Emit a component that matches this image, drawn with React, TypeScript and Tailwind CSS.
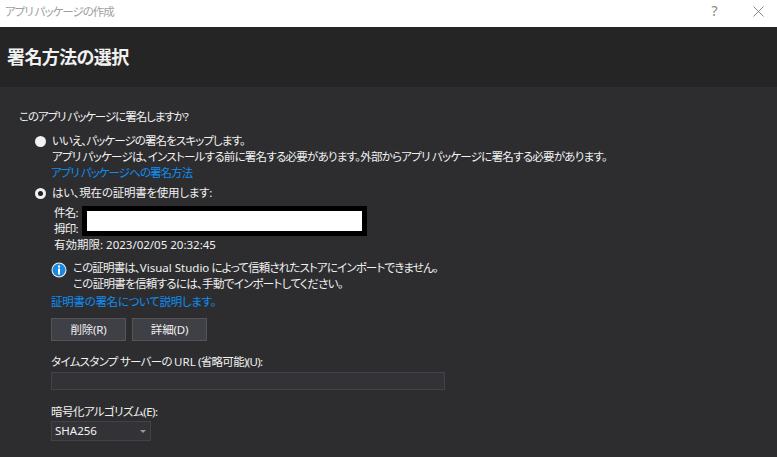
import React from "react";

const font = "font-['Noto_Sans','Noto_Sans_CJK_JP',sans-serif] [font-feature-settings:'palt']";

export default function App() {
  return (
    <div className={`w-[777px] h-[457px] overflow-hidden bg-[#2d2d30] text-[#f1f1f1] text-[11.5px] tracking-[-0.7px] leading-[16px] ${font}`}>
      {/* Title bar */}
      <div className="h-[27px] bg-white flex items-center justify-between text-[#a0a0a0]">
        <span className="pl-[5px] pb-[3px] tracking-[-1px]">アプリ パッケージの作成</span>
        <div className="flex items-center gap-[36px] pr-[13px] pb-[5px]">
          <span className="text-[14px] text-[#888]">?</span>
          <svg width="11" height="11" viewBox="0 0 11 11" stroke="#888" fill="none">
            <path d="M0.5 0.5L10.5 10.5M10.5 0.5L0.5 10.5" />
          </svg>
        </div>
      </div>

      {/* Header */}
      <div className="h-[60px] bg-[#252526] flex items-center pl-[7px] pb-[1px]">
        <h1 className="text-[18px] font-bold leading-[24px] tracking-[-0.6px]">署名方法の選択</h1>
      </div>

      <div className="pl-[19px] pt-[22px]">
        <div className="tracking-[-1.05px]">このアプリ パッケージに署名しますか?</div>

        {/* Skip signing */}
        <div className="flex mt-[8px] ml-[16px]">
          <span className="mt-[3px] w-[11px] h-[11px] rounded-full bg-[#f1f1f1] shrink-0" />
          <div className="ml-[6px]">
            <div className="tracking-[-0.9px]">いいえ、パッケージの署名をスキップします。</div>
            <div className="tracking-[-0.75px]">アプリ パッケージは、インストールする前に署名する必要があります。外部からアプリ パッケージに署名する必要があります。</div>
            <div className="ml-[-1px] text-[#0e8df0] tracking-[-0.95px]">アプリ パッケージへの署名方法</div>
          </div>
        </div>

        {/* Use current cert */}
        <div className="flex mt-[4px] ml-[16px]">
          <span className="mt-[3px] w-[11px] h-[11px] rounded-full bg-[#f1f1f1] shrink-0 flex items-center justify-center">
            <span className="w-[5px] h-[5px] rounded-full bg-[#1e1e1e]" />
          </span>
          <div className="ml-[6px] tracking-[-0.25px]">はい、現在の証明書を使用します:</div>
        </div>

        <div className="ml-[35px] mt-[4px] relative">
          <div>件名:</div>
          <div>拇印:</div>
          <div className="tracking-normal">有効期限: 2023/02/05 20:32:45</div>
          <div className="absolute left-[28px] top-[1px] w-[285px] h-[30px] bg-white border-[5px] border-black" />
        </div>

        {/* Info */}
        <div className="flex ml-[32px] mt-[7px]">
          <svg width="16" height="16" viewBox="0 0 16 16" className="mt-[2px] shrink-0">
            <circle cx="8" cy="8" r="7.5" fill="#f1f1f1" />
            <circle cx="8" cy="8" r="6.5" fill="#1b88e0" />
            <rect x="7" y="3.5" width="2" height="2" fill="#ffffff" />
            <rect x="7" y="6.5" width="2" height="6" fill="#ffffff" />
          </svg>
          <div className="ml-[6px]">
            <div className="tracking-[-0.85px]">この証明書は、<span className="tracking-normal">Visual Studio</span> によって信頼されたストアにインポートできません。</div>
            <div>この証明書を信頼するには、手動でインポートしてください。</div>
          </div>
        </div>

        <div className="ml-[32px] mt-[2px] text-[#0e8df0] tracking-[-0.3px]">証明書の署名について説明します。</div>

        {/* Buttons */}
        <div className="flex gap-[6px] ml-[32px] mt-[8px] tracking-[-0.2px]">
          <button className="w-[75px] h-[23px] bg-[#3f3f46] border border-[#555558]">削除(R)</button>
          <button className="w-[75px] h-[23px] bg-[#3f3f46] border border-[#555558]">詳細(D)</button>
        </div>

        <div className="ml-[32px] mt-[13px]">タイムスタンプ サーバーの <span className="tracking-normal">URL</span> (省略可能)(U):</div>
        <div className="ml-[32px] mt-[2px] w-[394px] h-[18px] bg-[#333337] border border-[#434346]" />

        <div className="ml-[32px] mt-[14px] tracking-[-0.55px]">暗号化アルゴリズム(E):</div>
        <div className="ml-[32px] mt-[1px] w-[100px] h-[20px] bg-[#333337] border border-[#434346] flex items-center justify-between pl-[3px] pr-[4px]">
          <span className="tracking-normal">SHA256</span>
          <span className="w-0 h-0 border-x-[3px] border-x-transparent border-t-[3px] border-t-[#999]" />
        </div>
      </div>
    </div>
  );
}
